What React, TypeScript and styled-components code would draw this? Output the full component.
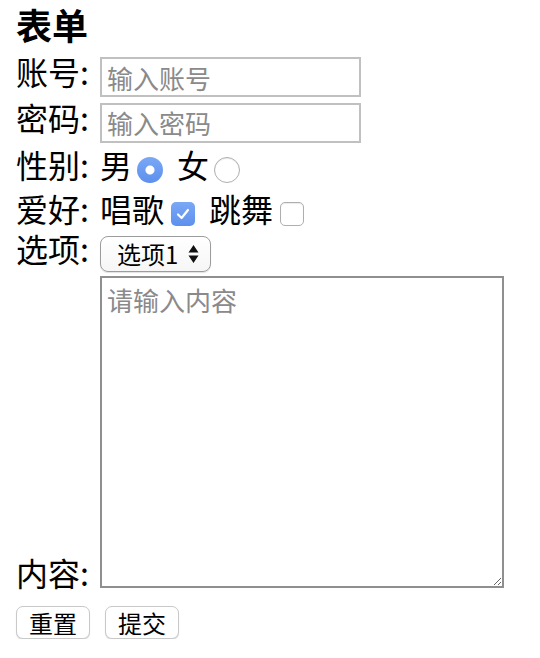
import React from "react";
import styled, { createGlobalStyle, css } from "styled-components";

const GlobalStyle = createGlobalStyle`
  body {
    margin: 0;
    background: #fff;
    color: #000;
    font-family: "Noto Sans CJK SC", "Noto Sans", sans-serif;
  }
`;

const StyledForm = styled.form`
  display: flex;
  flex-direction: column;
  padding-left: 16px;
`;

const StyledTitle = styled.h1`
  margin: 0;
  font-size: 36px;
  line-height: 48px;
  font-weight: 700;
`;

// controls sit a little lower than the text next to them (baseline look)
const drop = css`
  margin-top: 12px;
`;

const StyledRow = styled.div<{ $h: number; $end?: boolean }>`
  display: flex;
  align-items: ${(p) => (p.$end ? "flex-end" : "center")};
  height: ${(p) => p.$h}px;
`;

const StyledLabel = styled.span`
  flex: none;
  width: 84px;
  font-size: 32px;
  line-height: 32px;
  white-space: nowrap;
`;

const StyledText = styled.span`
  font-size: 32px;
  line-height: 32px;
  white-space: nowrap;
`;

const StyledInput = styled.input`
  ${drop};
  box-sizing: border-box;
  width: 261px;
  height: 40px;
  padding: 0 5px;
  border: 2px solid #c0c0c0;
  font-family: inherit;
  font-size: 26px;
  outline: none;
  &::placeholder {
    color: #8a8a8a;
  }
`;

const StyledOptions = styled.div`
  display: flex;
  align-items: center;
  gap: 8px;
`;

const StyledOption = styled.label`
  display: flex;
  align-items: center;
`;

const StyledRadio = styled.span<{ $checked?: boolean }>`
  ${drop};
  box-sizing: border-box;
  flex: none;
  width: 26px;
  height: 26px;
  margin-left: 5px;
  margin-right: 6px;
  border-radius: 50%;
  ${(p) =>
    p.$checked
      ? css`
          background: radial-gradient(circle, #fff 0 4px, transparent 5px),
            linear-gradient(#7aa8f5, #5d90ee);
        `
      : css`
          background: #fff;
          border: 1px solid #aeaeae;
          box-shadow: inset 0 1px 1px rgba(0, 0, 0, 0.08);
        `}
`;

const StyledCheckbox = styled.span<{ $checked?: boolean }>`
  ${drop};
  box-sizing: border-box;
  flex: none;
  display: flex;
  align-items: center;
  justify-content: center;
  width: 24px;
  height: 24px;
  margin-left: 7px;
  margin-right: 6px;
  border-radius: 5px;
  ${(p) =>
    p.$checked
      ? css`
          background: linear-gradient(#7aa8f5, #5d90ee);
        `
      : css`
          background: #fff;
          border: 1px solid #aeaeae;
          box-shadow: inset 0 1px 1px rgba(0, 0, 0, 0.08);
        `}
`;

const StyledSelect = styled.div`
  ${drop};
  box-sizing: border-box;
  display: flex;
  align-items: center;
  justify-content: space-between;
  width: 111px;
  height: 36px;
  padding: 0 11px 0 16px;
  border: 1px solid #9c9c9c;
  border-radius: 8px;
  background: linear-gradient(#fff, #f6f6f6);
  box-shadow: 0 1px 1px rgba(0, 0, 0, 0.12);
  font-size: 24px;
  line-height: 34px;
`;

const StyledTextarea = styled.textarea`
  box-sizing: border-box;
  width: 404px;
  height: 312px;
  margin: 0;
  padding: 3px 5px;
  border: 2px solid #8f8f8f;
  font-family: inherit;
  font-size: 26px;
  outline: none;
  &::placeholder {
    color: #8a8a8a;
  }
`;

const StyledButtons = styled.div`
  display: flex;
  gap: 15px;
  margin-top: 18px;
`;

const StyledButton = styled.button`
  box-sizing: border-box;
  height: 33px;
  padding: 0 12px;
  border: 1px solid #c8c8c8;
  border-radius: 7px;
  background: #fff;
  box-shadow: 0 1px 1px rgba(0, 0, 0, 0.14);
  font-family: inherit;
  font-size: 24px;
  line-height: 31px;
  color: #000;
`;

const Check = () => (
  <svg width="18" height="18" viewBox="0 0 18 18">
    <path d="M4 9.5 L7.6 13 L14 5" fill="none" stroke="#fff" strokeWidth="2.2" strokeLinecap="round" strokeLinejoin="round" />
  </svg>
);

const Arrows = () => (
  <svg width="11" height="20" viewBox="0 0 11 20">
    <path d="M5.5 1 L10.5 8.5 L0.5 8.5 Z M5.5 19 L10.5 11.5 L0.5 11.5 Z" fill="#111" />
  </svg>
);

const App = () => {
  return (
    <>
      <GlobalStyle />
      <StyledForm onSubmit={(e) => e.preventDefault()}>
        <StyledTitle>表单</StyledTitle>
        <StyledRow $h={46}>
          <StyledLabel>账号:</StyledLabel>
          <StyledInput type="text" placeholder="输入账号" />
        </StyledRow>
        <StyledRow $h={45}>
          <StyledLabel>密码:</StyledLabel>
          <StyledInput type="password" placeholder="输入密码" />
        </StyledRow>
        <StyledRow $h={50}>
          <StyledLabel>性别:</StyledLabel>
          <StyledOptions>
            <StyledOption>
              <StyledText>男</StyledText>
              <StyledRadio $checked />
            </StyledOption>
            <StyledOption>
              <StyledText>女</StyledText>
              <StyledRadio />
            </StyledOption>
          </StyledOptions>
        </StyledRow>
        <StyledRow $h={37}>
          <StyledLabel>爱好:</StyledLabel>
          <StyledOptions>
            <StyledOption>
              <StyledText>唱歌</StyledText>
              <StyledCheckbox $checked>
                <Check />
              </StyledCheckbox>
            </StyledOption>
            <StyledOption>
              <StyledText>跳舞</StyledText>
              <StyledCheckbox />
            </StyledOption>
          </StyledOptions>
        </StyledRow>
        <StyledRow $h={44}>
          <StyledLabel>选项:</StyledLabel>
          <StyledSelect role="listbox">
            <span>选项1</span>
            <Arrows />
          </StyledSelect>
        </StyledRow>
        <StyledRow $h={318} $end>
          <StyledLabel>内容:</StyledLabel>
          <StyledTextarea placeholder="请输入内容" />
        </StyledRow>
        <StyledButtons>
          <StyledButton type="reset">重置</StyledButton>
          <StyledButton type="submit">提交</StyledButton>
        </StyledButtons>
      </StyledForm>
    </>
  );
};

export default App;
